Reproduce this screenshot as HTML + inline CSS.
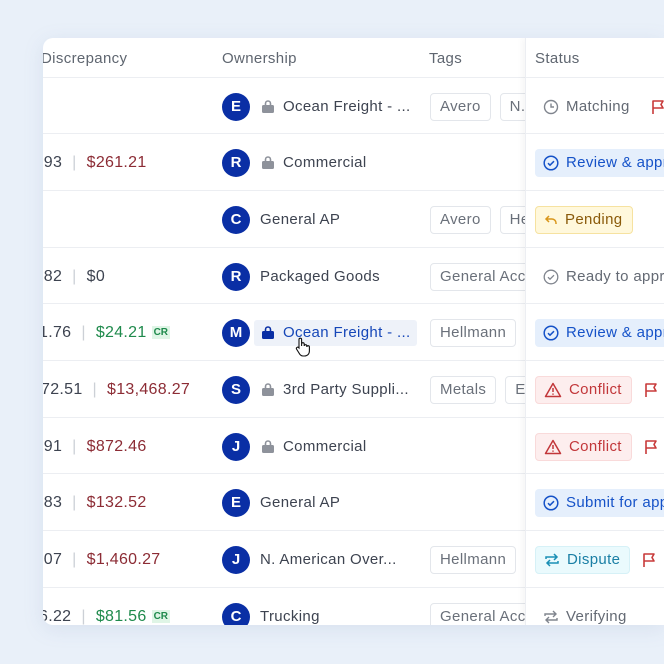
<!DOCTYPE html>
<html><head><meta charset="utf-8"><style>
*{margin:0;padding:0;box-sizing:border-box}
body{width:664px;height:664px;overflow:hidden;background:#e9f0f9;font-family:"Liberation Sans",sans-serif;font-size:15px;letter-spacing:0.35px;color:#3d4350;position:relative}
.card{position:absolute;left:43px;top:38px;width:621px;height:587px;background:#fff;border-radius:10px 0 0 10px;overflow:hidden;box-shadow:0 4px 20px rgba(120,140,180,.15)}
.hdr{position:absolute;top:1px;height:39px;line-height:39px;color:#5f6670}
.row{position:absolute;left:0;width:621px;height:57px;border-top:1px solid #eceef2}
.c{position:absolute;top:0;height:57px;display:flex;align-items:center;white-space:nowrap}
.num{font-size:16px;letter-spacing:0.3px}
.av{width:28px;height:28px;border-radius:50%;background:#0a2fa5;color:#fff;font-weight:bold;font-size:15px;letter-spacing:0;display:flex;align-items:center;justify-content:center;margin-right:10px}
.lock{width:12px;height:13px;margin-right:9px;margin-left:2px}
.tag{border:1px solid #e3e6eb;border-radius:4px;padding:0 9px;height:28px;line-height:26px;color:#6a707a;margin-right:9px}
.red{color:#8c2c35}.green{color:#1f8a4c}.sep{color:#ccd0d6;margin:0 10px}
.cr{background:#dff5e6;color:#1f8a4c;font-size:10px;font-weight:bold;padding:1px 2px;margin-left:5px;letter-spacing:0}
.stcol{position:absolute;left:482px;top:0;width:139px;height:587px;background:#fff;border-left:1px solid #eceef2;box-shadow:-3px 0 6px rgba(0,0,0,.04);overflow:hidden}
.stcol .row{width:139px}
.chip{display:flex;align-items:center;height:28px;padding:0 9px 0 8px;border-radius:4px}
.chip svg{margin-right:7px}
.blue{background:#e5effc;color:#1552c8}
.yel{background:#fff8dc;border:1px solid #f6e2a0;color:#8a5a0a}
.cf{background:#fdeeee;border:1px solid #f9dada;color:#c2373a}
.dis{background:#eafafd;border:1px solid #d6f1f7;color:#1a7fa5}
.gray{color:#646a74}
.flag{margin-left:12px}
</style></head><body>
<div class="card">
<div class="hdr" style="left:-2px">Discrepancy</div>
<div class="hdr" style="left:179px">Ownership</div>
<div class="hdr" style="left:386px">Tags</div>

<div class="row" style="top:39px">
 <div class="c" style="left:179px"><div class="av">E</div><svg class="lock" viewBox="0 0 12 13"><path d="M3.5 5V3.5a2.5 2.5 0 015 0V5" stroke="#8e929b" stroke-width="1.6" fill="none"/><rect x="0" y="5" width="12" height="8" rx="1.5" fill="#8e929b"/></svg>Ocean Freight - ...</div>
 <div class="c" style="left:387px"><span class="tag">Avero</span><span class="tag">N. American</span></div>
</div>
<div class="row" style="top:95px">
 <div class="c num" style="left:-4px">.93<span class="sep">|</span><span class="red">$261.21</span></div>
 <div class="c" style="left:179px"><div class="av">R</div><svg class="lock" viewBox="0 0 12 13"><path d="M3.5 5V3.5a2.5 2.5 0 015 0V5" stroke="#8e929b" stroke-width="1.6" fill="none"/><rect x="0" y="5" width="12" height="8" rx="1.5" fill="#8e929b"/></svg>Commercial</div>
</div>
<div class="row" style="top:152px">
 <div class="c" style="left:179px"><div class="av">C</div>General AP</div>
 <div class="c" style="left:387px"><span class="tag">Avero</span><span class="tag">Hellmann</span></div>
</div>
<div class="row" style="top:209px">
 <div class="c num" style="left:-4px">.82<span class="sep">|</span>$0</div>
 <div class="c" style="left:179px"><div class="av">R</div>Packaged Goods</div>
 <div class="c" style="left:387px"><span class="tag">General Accounts</span></div>
</div>
<div class="row" style="top:265px">
 <div class="c num" style="left:-4px">1.76<span class="sep">|</span><span class="green">$24.21</span><span class="cr">CR</span></div>
 <div class="c" style="left:179px"><div class="av">M</div><div style="display:flex;align-items:center;background:#eef2f9;height:26px;padding:0 6px;margin-left:-6px;border-radius:3px;color:#1647b8"><svg class="lock" viewBox="0 0 12 13"><path d="M3.5 5V3.5a2.5 2.5 0 015 0V5" stroke="#0a2fa5" stroke-width="1.6" fill="none"/><rect x="0" y="5" width="12" height="8" rx="1.5" fill="#0a2fa5"/></svg>Ocean Freight - ...</div></div>
 <div class="c" style="left:387px"><span class="tag">Hellmann</span><span class="tag">Avero</span></div>
 <svg style="position:absolute;left:252px;top:33px" width="16" height="20" viewBox="0 0 16 20"><path d="M4 2.5a1.3 1.3 0 012.6 0V9l0-2a1.3 1.3 0 012.6 0v2a1.3 1.3 0 012.6 0v1a1.3 1.3 0 012.6 0v4c0 3-2 5-5 5H8c-2 0-3-1-4-3L1.5 12a1.3 1.3 0 012.3-1.2L4 11z" fill="#fff" stroke="#111" stroke-width="1.1"/></svg>
</div>
<div class="row" style="top:322px">
 <div class="c num" style="left:-2px">72.51<span class="sep">|</span><span class="red">$13,468.27</span></div>
 <div class="c" style="left:179px"><div class="av">S</div><svg class="lock" viewBox="0 0 12 13"><path d="M3.5 5V3.5a2.5 2.5 0 015 0V5" stroke="#8e929b" stroke-width="1.6" fill="none"/><rect x="0" y="5" width="12" height="8" rx="1.5" fill="#8e929b"/></svg>3rd Party Suppli...</div>
 <div class="c" style="left:387px"><span class="tag">Metals</span><span class="tag">Equipment</span></div>
</div>
<div class="row" style="top:379px">
 <div class="c num" style="left:-4px">.91<span class="sep">|</span><span class="red">$872.46</span></div>
 <div class="c" style="left:179px"><div class="av">J</div><svg class="lock" viewBox="0 0 12 13"><path d="M3.5 5V3.5a2.5 2.5 0 015 0V5" stroke="#8e929b" stroke-width="1.6" fill="none"/><rect x="0" y="5" width="12" height="8" rx="1.5" fill="#8e929b"/></svg>Commercial</div>
</div>
<div class="row" style="top:435px">
 <div class="c num" style="left:-4px">.83<span class="sep">|</span><span class="red">$132.52</span></div>
 <div class="c" style="left:179px"><div class="av">E</div>General AP</div>
</div>
<div class="row" style="top:492px">
 <div class="c num" style="left:-4px">.07<span class="sep">|</span><span class="red">$1,460.27</span></div>
 <div class="c" style="left:179px"><div class="av">J</div>N. American Over...</div>
 <div class="c" style="left:387px"><span class="tag">Hellmann</span><span class="tag">Avero</span></div>
</div>
<div class="row" style="top:549px">
 <div class="c num" style="left:-4px">6.22<span class="sep">|</span><span class="green">$81.56</span><span class="cr">CR</span></div>
 <div class="c" style="left:179px"><div class="av">C</div>Trucking</div>
 <div class="c" style="left:387px"><span class="tag">General Accounts</span></div>
</div>

<div class="stcol">
 <div class="hdr" style="left:9px">Status</div>
 <div class="row" style="top:39px;left:0"><div class="c" style="left:9px"><div class="chip gray"><svg width="16" height="16" viewBox="0 0 16 16"><circle cx="8" cy="8" r="6.5" stroke="#80858e" stroke-width="1.4" fill="none"/><path d="M8 4.5V8h3" stroke="#80858e" stroke-width="1.4" fill="none"/></svg>Matching</div><svg class="flag" width="14" height="16" viewBox="0 0 14 16"><path d="M2 15V2h10l-2 3.5 2 3.5H2" stroke="#c83a3a" stroke-width="1.6" fill="none" stroke-linejoin="round"/></svg></div></div>
 <div class="row" style="top:95px;left:0"><div class="c" style="left:9px"><div class="chip blue"><svg width="16" height="16" viewBox="0 0 16 16"><circle cx="8" cy="8" r="6.8" stroke="#1552c8" stroke-width="1.5" fill="none"/><path d="M5 8.2l2 2 4-4" stroke="#1552c8" stroke-width="1.5" fill="none"/></svg>Review &amp; approve</div></div></div>
 <div class="row" style="top:152px;left:0"><div class="c" style="left:9px"><div class="chip yel"><svg width="14" height="14" viewBox="0 0 14 14"><path d="M5 3L2 6l3 3M2 6h6a4 4 0 014 4v1" stroke="#d9961a" stroke-width="1.5" fill="none"/></svg>Pending</div></div></div>
 <div class="row" style="top:209px;left:0"><div class="c" style="left:9px"><div class="chip gray"><svg width="16" height="16" viewBox="0 0 16 16"><circle cx="8" cy="8" r="6.8" stroke="#80858e" stroke-width="1.3" fill="none"/><path d="M5 8.2l2 2 4-4" stroke="#80858e" stroke-width="1.3" fill="none"/></svg>Ready to approve</div></div></div>
 <div class="row" style="top:265px;left:0"><div class="c" style="left:9px"><div class="chip blue"><svg width="16" height="16" viewBox="0 0 16 16"><circle cx="8" cy="8" r="6.8" stroke="#1552c8" stroke-width="1.5" fill="none"/><path d="M5 8.2l2 2 4-4" stroke="#1552c8" stroke-width="1.5" fill="none"/></svg>Review &amp; approve</div></div></div>
 <div class="row" style="top:322px;left:0"><div class="c" style="left:9px"><div class="chip cf"><svg width="18" height="16" viewBox="0 0 18 16"><path d="M9 1.5L1.5 14.5h15z" stroke="#c2373a" stroke-width="1.5" fill="none" stroke-linejoin="round"/><path d="M9 6v4M9 11.5v1.2" stroke="#c2373a" stroke-width="1.5"/></svg>Conflict</div><svg class="flag" width="14" height="16" viewBox="0 0 14 16"><path d="M2 15V2h10l-2 3.5 2 3.5H2" stroke="#c83a3a" stroke-width="1.6" fill="none" stroke-linejoin="round"/></svg></div></div>
 <div class="row" style="top:379px;left:0"><div class="c" style="left:9px"><div class="chip cf"><svg width="18" height="16" viewBox="0 0 18 16"><path d="M9 1.5L1.5 14.5h15z" stroke="#c2373a" stroke-width="1.5" fill="none" stroke-linejoin="round"/><path d="M9 6v4M9 11.5v1.2" stroke="#c2373a" stroke-width="1.5"/></svg>Conflict</div><svg class="flag" width="14" height="16" viewBox="0 0 14 16"><path d="M2 15V2h10l-2 3.5 2 3.5H2" stroke="#c83a3a" stroke-width="1.6" fill="none" stroke-linejoin="round"/></svg></div></div>
 <div class="row" style="top:435px;left:0"><div class="c" style="left:9px"><div class="chip blue"><svg width="16" height="16" viewBox="0 0 16 16"><circle cx="8" cy="8" r="6.8" stroke="#1552c8" stroke-width="1.5" fill="none"/><path d="M5 8.2l2 2 4-4" stroke="#1552c8" stroke-width="1.5" fill="none"/></svg>Submit for approval</div></div></div>
 <div class="row" style="top:492px;left:0"><div class="c" style="left:9px"><div class="chip dis"><svg width="16" height="16" viewBox="0 0 16 16"><path d="M2 7V5h11M10 2l3 3-3 3M14 9v2H3M6 14l-3-3 3-3" stroke="#1a8fb5" stroke-width="1.5" fill="none"/></svg>Dispute</div><svg class="flag" width="14" height="16" viewBox="0 0 14 16"><path d="M2 15V2h10l-2 3.5 2 3.5H2" stroke="#c83a3a" stroke-width="1.6" fill="none" stroke-linejoin="round"/></svg></div></div>
 <div class="row" style="top:549px;left:0"><div class="c" style="left:9px"><div class="chip gray"><svg width="16" height="16" viewBox="0 0 16 16"><path d="M2 7V5h11M10 2l3 3-3 3M14 9v2H3M6 14l-3-3 3-3" stroke="#80858e" stroke-width="1.4" fill="none"/></svg>Verifying</div></div></div>
</div>
</div>
</body></html>
